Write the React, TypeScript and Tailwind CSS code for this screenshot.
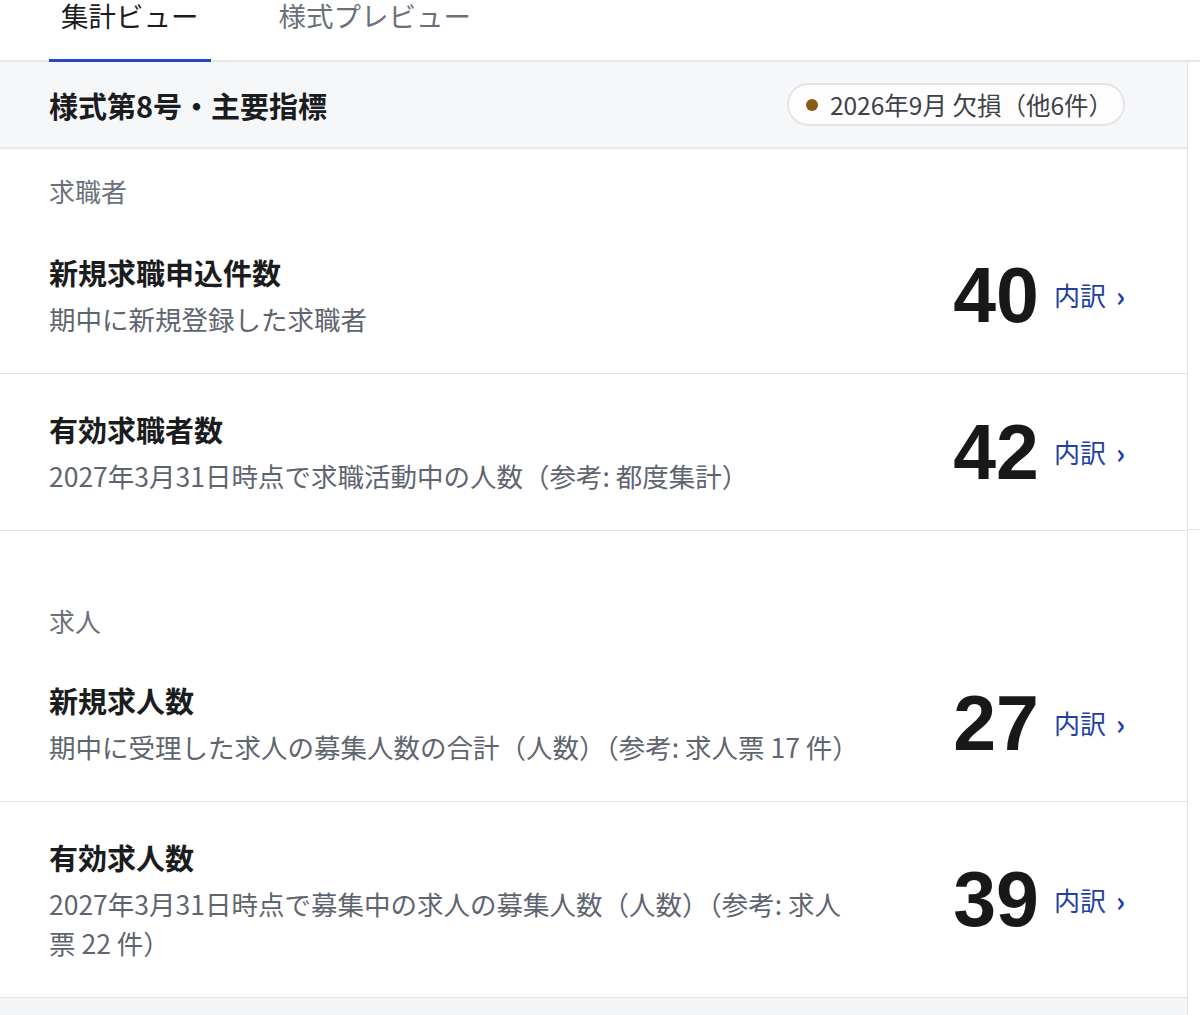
const jp = { fontFamily: '"Noto Sans CJK JP", "Noto Sans", sans-serif' }

type Metric = {
  title: string
  desc: string
  value: number
}

const seekers: Metric[] = [
  { title: "新規求職申込件数", desc: "期中に新規登録した求職者", value: 40 },
  { title: "有効求職者数", desc: "2027年3月31日時点で求職活動中の人数（参考: 都度集計）", value: 42 },
]

const openings: Metric[] = [
  { title: "新規求人数", desc: "期中に受理した求人の募集人数の合計（人数）（参考: 求人票 17 件）", value: 27 },
  { title: "有効求人数", desc: "2027年3月31日時点で募集中の求人の募集人数（人数）（参考: 求人票 22 件）", value: 39 },
]

const MetricRow = ({ m }: { m: Metric }) => {
  return (
    <div className="flex items-center gap-[80px] border-b border-[#e2e4e7] py-[35px] pl-[49px] pr-[62px]">
      <div className="flex min-w-0 flex-1 flex-col gap-[7px]">
        <p className="text-[29px] font-bold leading-[40px] text-[#1b1c1e]">{m.title}</p>
        <p className="text-[26.5px] leading-[39px] text-[#5e6570]">{m.desc}</p>
      </div>
      <div className="flex w-[180px] shrink-0 items-center justify-end gap-[15px]">
        <span
          className="text-[77px] font-bold leading-none text-[#17181a]"
          style={{ fontFamily: '"Liberation Sans", Arial, sans-serif' }}
        >
          {m.value}
        </span>
        <a className="flex shrink-0 items-center gap-[10px] whitespace-nowrap text-[26px] leading-[36px] text-[#1f3fa3]">
          内訳
          <span className="text-[28px] font-bold">›</span>
        </a>
      </div>
    </div>
  )
}

export default function App() {
  return (
    <div className="flex h-[1015px] flex-col overflow-hidden bg-white" style={jp}>
      {/* tabs */}
      <div className="flex gap-[56px] border-b-2 border-[#e6e8eb] pl-[49px]">
        <button className="-mb-[2px] border-b-[3px] border-[#2748c2] px-[12px] pb-[28px] text-[27.5px] leading-[31px] text-[#1b1c1e]">
          集計ビュー
        </button>
        <button className="-mb-[2px] border-b-[3px] border-transparent px-[12px] pb-[28px] text-[27.5px] leading-[31px] text-[#6a717b]">
          様式プレビュー
        </button>
      </div>

      <div className="flex flex-1">
        <div className="flex w-[1188px] flex-col border-r border-[#e2e4e7] bg-[#f4f5f7]">
          <div className="bg-white">
            {/* header */}
            <div className="flex items-center justify-between border-b-2 border-[#e6e8eb] bg-[#f6f7f9] py-[21px] pl-[49px] pr-[62px]">
              <p className="text-[29px] font-bold leading-[40px] text-[#1b1c1e]">様式第8号・主要指標</p>
              <div className="flex h-[43px] items-center gap-[12px] rounded-full border-2 border-[#e3e5e8] bg-[#fdfdfd] pl-[17px] pr-[10px]">
                <span className="h-[12px] w-[12px] rounded-full bg-[#8b5a14]" />
                <span className="text-[24.5px] leading-[32px] text-[#3d4148]">2026年9月 欠損（他6件）</span>
              </div>
            </div>

            {/* 求職者 */}
            <p className="pb-[11px] pl-[49px] pt-[27px] text-[26px] leading-[30px] text-[#6b717a]">求職者</p>
            {seekers.map((m) => (
              <MetricRow key={m.title} m={m} />
            ))}

            {/* 求人 */}
            <p className="pb-[9px] pl-[49px] pt-[75px] text-[26px] leading-[30px] text-[#6b717a]">求人</p>
            {openings.map((m) => (
              <MetricRow key={m.title} m={m} />
            ))}
          </div>
        </div>

        {/* neighbouring panel edge */}
        <div className="flex flex-1 flex-col pt-[467px]">
          <div className="flex-1 border-t border-[#e2e4e7]" />
        </div>
      </div>
    </div>
  )
}
